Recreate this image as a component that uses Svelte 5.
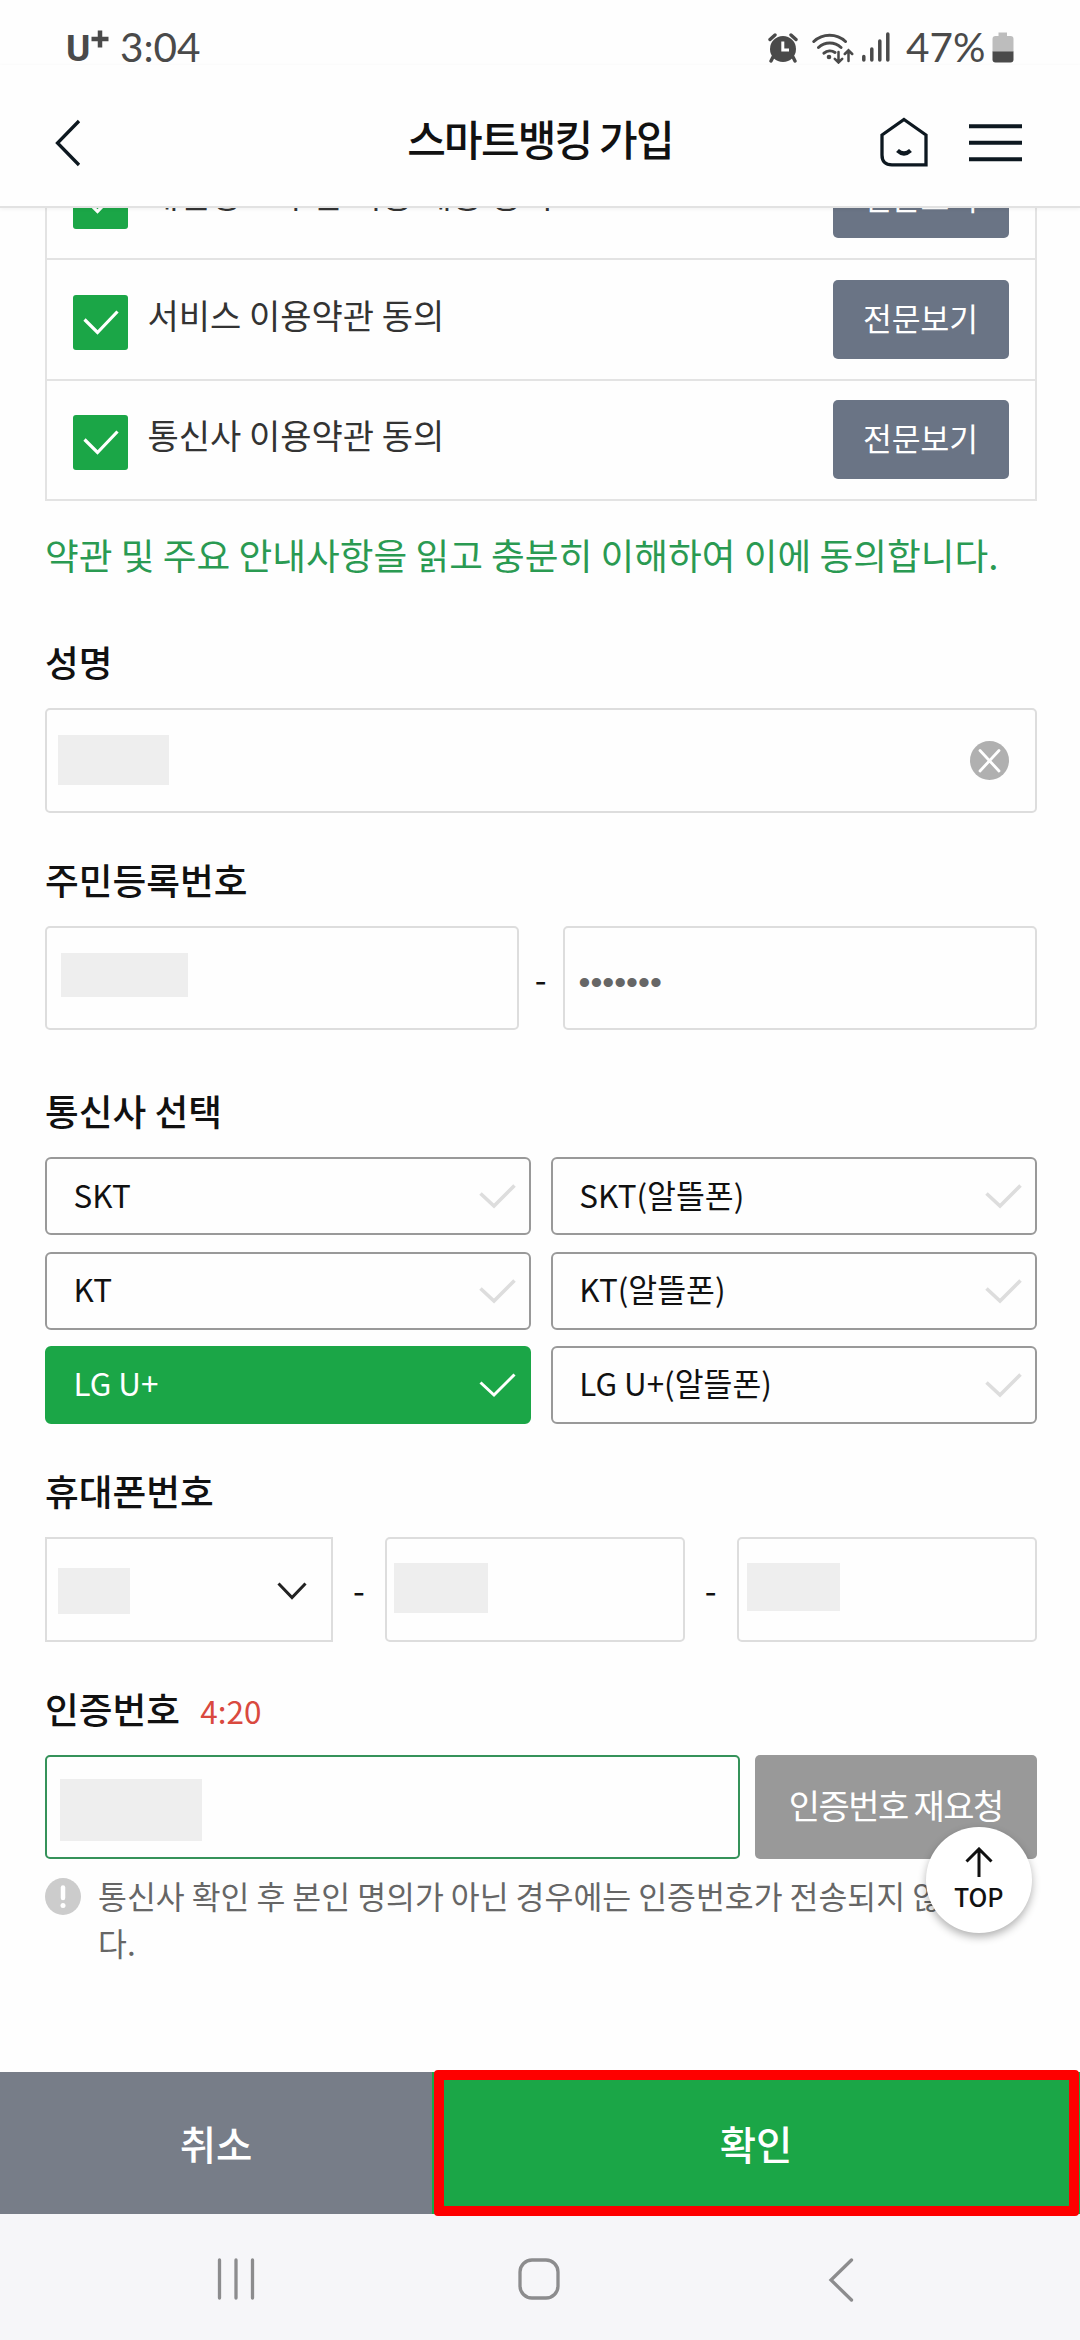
<script>

    let agreements = ["개인정보 수집 이용 제공 동의", "서비스 이용약관 동의", "통신사 이용약관 동의"];
    let carriers = ["SKT", "SKT(알뜰폰)", "KT", "KT(알뜰폰)", "LG U+", "LG U+(알뜰폰)"];
    let selected = "LG U+";

    function selectCarrier(carrier){
        selected = carrier;
    }

</script>

<div class="screen">
    <div class="status">
        <span class="telecom">U<svg width="18" height="18" viewBox="0 0 18 18"><path d="M9 0.5V17.5M0.5 9H17.5" stroke-width="4.5"/></svg></span>
        <span class="time">3:04</span>
        <div class="status-icons">
            <svg class="alarm" width="30" height="31" viewBox="0 0 30 31">
                <circle cx="15" cy="17" r="13" fill="#4a4a4a" stroke="none"/>
                <path d="M2 7.5L7 3M28 7.5L23 3M5 25L3 29M25 25L27 29" stroke-width="3.4"/>
                <path d="M14.8 9.5V18H21" class="hands"/>
            </svg>
            <svg class="wifi" width="42" height="32" viewBox="0 0 42 32">
                <path d="M1.8 9.5A23 23 0 0 1 33.5 9.5M6.5 15.5A16.5 16.5 0 0 1 29 15.5M12 21.2A9 9 0 0 1 23 20.5" stroke-width="3"/>
                <circle cx="17" cy="25" r="2.3" fill="#4a4a4a" stroke="none"/>
                <path d="M26.5 20V30M22.8 26.8L26.5 30.5L30.2 26.8M36.5 29V18.5M32.8 22L36.5 18.3L40.2 22" stroke-width="2.5"/>
            </svg>
            <svg class="signal" width="28" height="30" viewBox="0 0 28 30">
                <path d="M1.8 24.5V28M9.8 17V28M17.8 9V28M25.8 2V28" stroke-width="3.5"/>
            </svg>
            <span class="percent">47%</span>
            <svg width="22" height="31" viewBox="0 0 22 31">
                <path d="M6.5 0.5H15V4H18.5Q21.5 4 21.5 7V20H0.5V7Q0.5 4 3.5 4H6.5Z" fill="#bdbdbd" stroke="none"/>
                <path d="M0.5 19.5H21.5V27.5Q21.5 30.5 18.5 30.5H3.5Q0.5 30.5 0.5 27.5Z" fill="#4a4a4a" stroke="none"/>
            </svg>
        </div>
    </div>

    <header>
        <svg class="back" width="26" height="48" viewBox="0 0 26 48"><path d="M24 2L2.5 24L24 46"/></svg>
        <h1>스마트뱅킹 가입</h1>
        <div class="header-icons">
            <svg width="48" height="50" viewBox="0 0 48 50">
                <path d="M24 2.5L46 18V47.8H12Q2 47.8 2 38V18Z"/>
                <path d="M17.5 33.5Q24 39.5 30.5 33.5" stroke-width="4.2"/>
            </svg>
            <svg width="53" height="38" viewBox="0 0 53 38"><path d="M0 2.2H53M0 18.7H53M0 35.2H53" stroke-width="4"/></svg>
        </div>
    </header>

    <main>
        <ul class="agreements">
            {#each agreements as agreement}
                <li>
                    <span class="checkbox"><svg width="36" height="26" viewBox="0 0 36 26"><path d="M1.5 9.5L14.5 22.5L34.5 1.5"/></svg></span>
                    <span class="agreement">{agreement}</span>
                    <button class="view">전문보기</button>
                </li>
            {/each}
        </ul>
        <p class="notice">약관 및 주요 안내사항을 읽고 충분히 이해하여 이에 동의합니다.</p>

        <section class="name">
            <h2>성명</h2>
            <div class="box">
                <span class="mask mask-name"></span>
                <svg class="clear" width="39" height="39" viewBox="0 0 39 39">
                    <circle cx="19.5" cy="19.5" r="19.5"/>
                    <path d="M10 9.5L29 30M29 9.5L10 30"/>
                </svg>
            </div>
        </section>

        <section>
            <h2>주민등록번호</h2>
            <div class="row">
                <div class="box half"><span class="mask mask-id"></span></div>
                <span class="dash">-</span>
                <div class="box half"><span class="dots">•••••••</span></div>
            </div>
        </section>

        <section class="carrier">
            <h2>통신사 선택</h2>
            <div class="carriers">
                {#each carriers as carrier}
                    <button class:active={carrier === selected} on:click={() => selectCarrier(carrier)}>
                        {carrier}
                        <svg width="37" height="25" viewBox="0 0 37 25"><path d="M1.5 9.5L15 22L35.5 1.5"/></svg>
                    </button>
                {/each}
            </div>
        </section>

        <section>
            <h2>휴대폰번호</h2>
            <div class="row">
                <div class="box select">
                    <span class="mask mask-first"></span>
                    <svg class="chevron" width="30" height="18" viewBox="0 0 30 18"><path d="M1.5 1.5L15 15.5L28.5 1.5"/></svg>
                </div>
                <span class="dash wide">-</span>
                <div class="box number"><span class="mask mask-middle"></span></div>
                <span class="dash wide">-</span>
                <div class="box number"><span class="mask mask-last"></span></div>
            </div>
        </section>

        <section>
            <h2>인증번호 <span class="timer">4:20</span></h2>
            <div class="row">
                <div class="box code"><span class="mask mask-code"></span></div>
                <button class="resend">인증번호 재요청</button>
            </div>
            <div class="info">
                <svg width="36" height="37" viewBox="0 0 36 37">
                    <ellipse cx="18" cy="18.5" rx="18" ry="18.5" fill="#ccc"/>
                    <path d="M18 9.5V20" stroke="#fff" stroke-width="4.5" stroke-linecap="round"/>
                    <circle cx="18" cy="27.5" r="2.5" fill="#fff"/>
                </svg>
                <p>통신사 확인 후 본인 명의가 아닌 경우에는 인증번호가 전송되지 않습니다.</p>
            </div>
        </section>

        <button class="top">
            <svg width="28" height="31" viewBox="0 0 28 31"><path d="M14 30V2M1.5 14.5L14 2L26.5 14.5"/></svg>
            TOP
        </button>
    </main>

    <footer>
        <button class="cancel">취소</button>
        <button class="confirm">확인</button>
        <div class="highlight"></div>
    </footer>

    <nav>
        <svg width="38" height="42" viewBox="0 0 38 42"><path d="M2.5 2V40M19 2V40M35.5 2V40"/></svg>
        <svg class="home" width="42" height="42" viewBox="0 0 42 42"><rect x="2" y="2" width="38" height="38" rx="12"/></svg>
        <svg width="26" height="44" viewBox="0 0 26 44"><path d="M23.5 2L3 22L23.5 42"/></svg>
    </nav>
</div>

<style>
    :global(body) {
        background: #fefefe;
    }

    .screen {
        width: 1080px;
        height: 2340px;
        display: flex;
        flex-direction: column;
        overflow: hidden;
        background: #fefefe;
        color: #111;
        font-family: "Noto Sans CJK KR", sans-serif;
    }

    h1, h2, p, ul {
        margin: 0;
        padding: 0;
        font-weight: 500;
    }

    button {
        border: 0;
        padding: 0;
        font-family: inherit;
    }

    svg {
        flex: none;
        fill: none;
    }

    .status {
        height: 65px;
        display: flex;
        align-items: flex-start;
        padding: 0 66px 0 66px;
        color: #4a4a4a;
        font-family: Lato, sans-serif;
        font-size: 40.5px;
        line-height: 48px;
    }

    .status svg {
        stroke: #4a4a4a;
        stroke-linecap: round;
    }

    .telecom {
        display: flex;
        width: 54px;
        padding-top: 25px;
        font-family: Roboto, sans-serif;
        font-size: 37px;
        font-weight: 700;
    }

    .telecom svg {
        margin: 5px 0 0 1px;
        stroke-linecap: butt;
    }

    .time, .percent {
        padding-top: 23px;
    }

    .status-icons {
        display: flex;
        align-items: flex-start;
        margin-left: auto;
    }

    .status-icons svg {
        margin-top: 32px;
    }

    .alarm .hands {
        stroke: #fff;
        stroke-width: 3px;
        stroke-linecap: butt;
    }

    .wifi {
        margin-left: 14px;
    }

    .signal {
        margin-left: 8px;
    }

    .percent {
        width: 86px;
        margin-left: 16px;
    }

    header {
        height: 141px;
        display: grid;
        grid-template-columns: 1fr auto 1fr;
        border-bottom: 2px solid #e2e2e2;
        box-shadow: 0 1px 4px rgba(0, 0, 0, 0.06);
        position: relative;
        z-index: 1;
    }

    header svg {
        stroke: #0d1820;
        stroke-width: 3.3px;
    }

    .back {
        margin: 54px 0 0 55px;
    }

    h1 {
        margin-top: 43px;
        font-size: 42px;
        line-height: 60px;
        letter-spacing: -1.8px;
    }

    .header-icons {
        display: flex;
        justify-content: flex-end;
        gap: 41px;
        padding: 52px 58px 0 0;
    }

    .header-icons svg:last-child {
        margin-top: 7px;
    }

    main {
        position: relative;
        height: 1864px;
        flex: none;
        box-sizing: border-box;
        padding: 0 43.5px 0 45px;
        overflow: hidden;
    }

    .agreements {
        margin-top: -68.5px;
        border: 2px solid #e3e3e3;
        border-width: 0 2px;
        list-style: none;
    }

    li {
        display: flex;
        align-items: flex-start;
        height: 120.5px;
        box-sizing: border-box;
        padding: 19.5px 26px 0;
        border-bottom: 2px solid #e3e3e3;
    }

    .checkbox {
        display: flex;
        justify-content: center;
        width: 55px;
        height: 55px;
        margin-top: 15px;
        box-sizing: border-box;
        padding-top: 15px;
        border-radius: 3px;
        background: #1ba647;
    }

    .checkbox svg {
        stroke: #fff;
        stroke-width: 3.2px;
    }

    .agreement {
        flex: 1;
        margin: 11px 0 0 19.5px;
        color: #333;
        font-size: 34px;
        font-weight: 400;
        line-height: 48px;
    }

    .view {
        width: 176px;
        height: 79px;
        padding-bottom: 4px;
        border-radius: 5px;
        background: #6a7485;
        color: #fff;
        font-size: 31.3px;
    }

    .notice {
        margin-top: 29px;
        color: #2a9a52;
        font-size: 36.7px;
        font-weight: 400;
        line-height: 48px;
        white-space: nowrap;
    }

    section {
        margin-top: 43.3px;
    }

    .name {
        margin-top: 60.3px;
    }

    .carrier {
        margin-top: 56.8px;
    }

    h2 {
        height: 48px;
        margin-bottom: 22px;
        font-size: 36.7px;
        line-height: 46.6px;
    }

    .row {
        display: flex;
        height: 104.4px;
    }

    .box {
        display: flex;
        align-items: flex-start;
        height: 104.4px;
        box-sizing: border-box;
        border: 2px solid #ddd;
        border-radius: 5px;
        background: #fefefe;
    }

    .mask {
        background: #eee;
    }

    .mask-name {
        width: 111px;
        height: 50px;
        margin: 25px 0 0 11px;
    }

    .mask-id {
        width: 127px;
        height: 44px;
        margin: 25px 0 0 14px;
    }

    .mask-first {
        width: 72px;
        height: 46px;
        margin: 29px 0 0 11px;
    }

    .mask-middle {
        width: 94px;
        height: 50px;
        margin: 24px 0 0 7px;
    }

    .mask-last {
        width: 93px;
        height: 48px;
        margin: 24px 0 0 8px;
    }

    .mask-code {
        width: 142px;
        height: 62px;
        margin: 22px 0 0 13px;
    }

    .clear {
        margin: 31px 25.5px 0 auto;
    }

    .clear circle {
        fill: #b0b0b0;
    }

    .clear path {
        stroke: #fff;
        stroke-width: 2.8px;
        stroke-linecap: round;
    }

    .half, .number {
        flex: 1;
    }

    .dash {
        width: 44.5px;
        text-align: center;
        font-size: 34px;
        line-height: 105px;
    }

    .dash.wide {
        width: 52px;
    }

    .dots {
        margin-left: 13.5px;
        color: #666;
        font-family: "Liberation Sans", sans-serif;
        font-size: 34px;
        line-height: 108px;
    }

    .carriers {
        display: grid;
        grid-template-columns: 1fr 1fr;
        grid-auto-rows: 78px;
        gap: 16.4px 20px;
    }

    .carriers button {
        display: flex;
        align-items: center;
        justify-content: space-between;
        padding: 0 12.5px 4px 26.5px;
        border: 2px solid #999;
        border-radius: 6px;
        background: #fefefe;
        color: #111;
        font-size: 31.4px;
    }

    .carriers svg {
        margin-top: 5px;
        stroke: #ddd;
        stroke-width: 3.6px;
    }

    .carriers .active {
        border-color: #1ba647;
        background: #1ba647;
        color: #fff;
    }

    .carriers .active svg {
        stroke: #fff;
        stroke-width: 3px;
    }

    .select {
        width: 288px;
        justify-content: space-between;
        border-radius: 0;
    }

    .chevron {
        margin: 43px 24px 0 0;
        stroke: #222;
        stroke-width: 3px;
    }

    .timer {
        margin-left: 12px;
        color: #d9493f;
        font-size: 31.5px;
        font-weight: 400;
    }

    .code {
        flex: 1;
        border-color: #35925a;
    }

    .resend {
        width: 281.5px;
        margin-left: 15px;
        padding-bottom: 6px;
        border-radius: 5px;
        background: #999;
        color: #fff;
        font-size: 34px;
        letter-spacing: -1.6px;
    }

    .info {
        display: flex;
        align-items: flex-start;
        gap: 17px;
        margin-top: 12.6px;
        padding-right: 16px;
        color: #666;
        font-size: 31.4px;
        line-height: 47px;
    }

    .info svg {
        margin-top: 6px;
    }

    .info p {
        font-weight: 400;
    }

    .top {
        position: absolute;
        right: 48.5px;
        top: 1619.3px;
        display: flex;
        flex-direction: column;
        align-items: center;
        width: 105.5px;
        height: 105.5px;
        padding-top: 20px;
        border-radius: 50%;
        background: #fff;
        box-shadow: 0 4px 8px rgba(0, 0, 0, 0.3);
        color: #111;
        font-size: 25px;
        font-weight: 500;
        line-height: 36px;
    }

    .top svg {
        stroke: #111;
        stroke-width: 3px;
    }

    footer {
        position: relative;
        display: flex;
        flex: none;
        height: 142px;
    }

    footer button {
        padding-bottom: 2px;
        color: #fff;
        font-size: 39.5px;
        font-weight: 500;
    }

    .cancel {
        width: 40%;
        background: #777d88;
    }

    .confirm {
        width: 60%;
        background: #1ba647;
    }

    .highlight {
        position: absolute;
        top: -2px;
        right: 1px;
        bottom: -2px;
        left: 434px;
        border: 10px solid #fe0000;
        border-radius: 4px;
    }

    nav {
        flex: 1;
        display: flex;
        align-items: flex-start;
        justify-content: space-between;
        padding: 44px 226px 0 217px;
        background: #f6f6f9;
    }

    nav svg {
        stroke: #8c8c8e;
        stroke-width: 3.3px;
        stroke-linecap: round;
    }

    .home {
        margin-left: -6px;
    }
</style>
